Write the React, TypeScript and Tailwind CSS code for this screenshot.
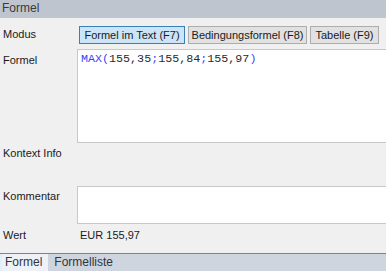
import React from 'react';

export default function App() {
  return (
    <div
      className="w-[386px] h-[271px] bg-[#f0f0f0] flex flex-col overflow-hidden text-[11px] text-[#1a1a1a] [font-family:'Liberation_Sans',Arial,sans-serif]"
    >
      {/* Kopfzeile */}
      <div className="h-[18px] shrink-0 bg-[#bec5ce] pl-[2px] text-[12px] leading-[17px] text-[#3a3a3a]">
        Formel
      </div>

      <div className="flex-1 flex flex-col">
        {/* Modus */}
        <div className="flex pt-[8px]">
          <div className="w-[77px] shrink-0 pl-[3px] pt-[1px] leading-[14px]">Modus</div>
          <div className="flex gap-[3px] pl-[2px]">
            <button className="h-[18px] w-[106px] border border-[#3c7fb1] bg-[#cce4f7] text-[11px] leading-[16px] text-[#1a1a1a]">
              Formel im Text (F7)
            </button>
            <button className="h-[18px] w-[119px] border border-[#adadad] bg-[#e1e1e1] text-[11px] leading-[16px] text-[#1a1a1a]">
              Bedingungsformel (F8)
            </button>
            <button className="h-[18px] w-[69px] border border-[#adadad] bg-[#e1e1e1] text-[11px] leading-[16px] text-[#1a1a1a]">
              Tabelle (F9)
            </button>
          </div>
        </div>

        {/* Formel */}
        <div className="flex pt-[5px]">
          <div className="w-[77px] shrink-0 pl-[3px] pt-[4px] leading-[14px]">Formel</div>
          <div className="flex-1 h-[94px] -mr-[2px] bg-white border border-[#c8c8c8] pl-[3px] pt-[2px]">
            <div className="text-[11.7px] leading-[15px] [font-family:'Liberation_Mono','DejaVu_Sans_Mono',monospace] text-[#2a2a2a]">
              <span className="text-[#3f3ff5]">MAX(</span>155,35<span className="text-[#3f3ff5]">;</span>155,84<span className="text-[#3f3ff5]">;</span>155,97<span className="text-[#3f3ff5]">)</span>
            </div>
          </div>
        </div>

        {/* Kontext Info */}
        <div className="flex h-[44px] pt-[3px]">
          <div className="w-[77px] shrink-0 pl-[3px] leading-[14px] whitespace-nowrap">Kontext Info</div>
        </div>

        {/* Kommentar */}
        <div className="flex -mt-[1px]">
          <div className="w-[77px] shrink-0 pl-[3px] pt-[3px] leading-[14px]">Kommentar</div>
          <div className="flex-1 h-[38px] -mr-[2px] bg-white border border-[#c8c8c8]" />
        </div>

        {/* Wert */}
        <div className="flex pt-[4px]">
          <div className="w-[77px] shrink-0 pl-[3px] leading-[14px]">Wert</div>
          <div className="pl-[3px] leading-[14px]">EUR 155,97</div>
        </div>
      </div>

      {/* Reiter */}
      <div className="h-[18px] shrink-0 border-t border-[#7d838b] bg-[#cfd5de] flex text-[12px] leading-[17px] text-[#2f3640]">
        <div className="bg-[#eef2f6] border-l-2 border-[#dff0fb] pl-[3px] pr-[6px]">Formel</div>
        <div className="pl-[6px]">Formelliste</div>
      </div>
    </div>
  );
}
